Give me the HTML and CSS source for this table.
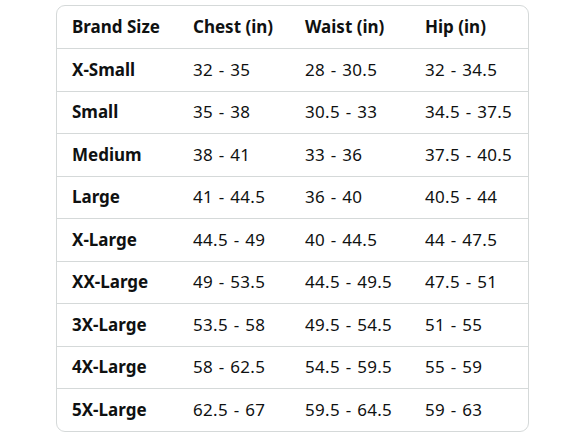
FILE: index.html
```html
<!DOCTYPE html>
<html lang="en">
<head>
    <meta charset="UTF-8">
    <meta name="viewport" content="width=device-width, initial-scale=1.0">
    <title>Size Chart</title>
    <link rel="stylesheet" href="styles.css">
</head>
<body>

<div class="size-chart">
    <table>
        <colgroup>
            <col class="col-size">
            <col class="col-chest">
            <col class="col-waist">
            <col class="col-hip">
        </colgroup>
        <thead>
            <tr>
                <th>Brand Size</th>
                <th>Chest (in)</th>
                <th>Waist (in)</th>
                <th>Hip (in)</th>
            </tr>
        </thead>
        <tbody>
            <tr><th>X-Small</th><td>32 - 35</td><td>28 - 30.5</td><td>32 - 34.5</td></tr>
            <tr><th>Small</th><td>35 - 38</td><td>30.5 - 33</td><td>34.5 - 37.5</td></tr>
            <tr><th>Medium</th><td>38 - 41</td><td>33 - 36</td><td>37.5 - 40.5</td></tr>
            <tr><th>Large</th><td>41 - 44.5</td><td>36 - 40</td><td>40.5 - 44</td></tr>
            <tr><th>X-Large</th><td>44.5 - 49</td><td>40 - 44.5</td><td>44 - 47.5</td></tr>
            <tr><th>XX-Large</th><td>49 - 53.5</td><td>44.5 - 49.5</td><td>47.5 - 51</td></tr>
            <tr><th>3X-Large</th><td>53.5 - 58</td><td>49.5 - 54.5</td><td>51 - 55</td></tr>
            <tr><th>4X-Large</th><td>58 - 62.5</td><td>54.5 - 59.5</td><td>55 - 59</td></tr>
            <tr><th>5X-Large</th><td>62.5 - 67</td><td>59.5 - 64.5</td><td>59 - 63</td></tr>
        </tbody>
    </table>
</div>

</body>
</html>
```

FILE: styles.css
```css
/* Page */
body {
    margin: 0;
    background-color: #ffffff;
    font-family: "Noto Sans", "Open Sans", Arial, sans-serif;
    color: #0f1111;
}
/* Chart card */
.size-chart {
    width: 471px;
    margin: 5px 0 0 56px;
    border: 1px solid #d5d9d9;
    border-radius: 9px;
    overflow: hidden;
}
.size-chart table {
    width: 100%;
    table-layout: fixed;
    border-collapse: collapse;
    font-size: 17px;
}
.size-chart .col-size { width: 121px; }
.size-chart .col-chest { width: 112px; }
.size-chart .col-waist { width: 120px; }
.size-chart th,
.size-chart td {
    height: 42.5px;
    padding: 0 0 0 15px;
    text-align: left;
    white-space: nowrap;
    line-height: 20px;
    box-sizing: border-box;
}
.size-chart th {
    font-weight: 700;
}
.size-chart td {
    font-weight: 400;
    letter-spacing: 0.3px;
    word-spacing: 1px;
}
.size-chart tbody tr {
    border-top: 1px solid #d5d9d9;
}
```
